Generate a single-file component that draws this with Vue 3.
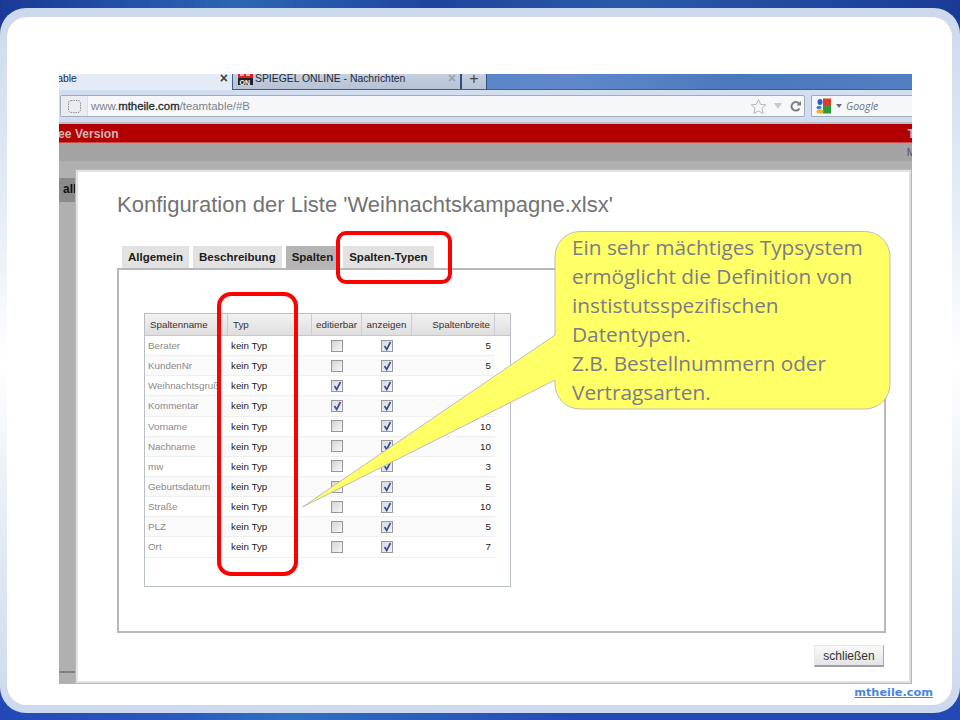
<template>
  <div class="slide">
    <div class="frame">
      <div class="sheet">
        <div class="shot">
          <div class="tabbar">
            <div class="btab active">
              <span class="btab-title">Table</span>
              <span class="btab-x">×</span>
            </div>
            <div class="btab other">
              <svg class="favicon" width="15" height="11" viewBox="0 0 15 11">
                <rect width="15" height="4" fill="#d8232a" />
                <rect y="4" width="15" height="7" fill="#222" />
                <rect x="2" y="0" width="4" height="2" fill="#f3b0a8" />
                <rect x="8" y="0" width="4" height="2" fill="#f3b0a8" />
                <text x="1.500" y="10.500" font-size="7" font-weight="700" fill="#fff" font-family="Liberation Sans, sans-serif">ON</text>
              </svg>
              <span class="btab-title">SPIEGEL ONLINE - Nachrichten</span>
              <span class="btab-x dim">×</span>
            </div>
            <div class="plus">+</div>
          </div>
          <div class="navbar">
            <div class="urlbar">
              <div class="identity">
                <svg width="15" height="15" viewBox="0 0 15 15">
                  <rect x="1.500" y="1.500" width="12" height="12" rx="2.500" fill="none" stroke="#8c8c8c" stroke-dasharray="1.500 1" />
                </svg>
              </div>
              <div class="url">www.<b>mtheile.com</b>/teamtable/#B</div>
              <svg class="star" width="17" height="17" viewBox="0 0 17 17">
                <path d="M8.500 1.500l2.100 4.900 5.200.5-3.900 3.400 1.200 5.200-4.600-2.700-4.600 2.700 1.200-5.200L1.200 6.900l5.200-.5z" fill="#f6f8fb" stroke="#b4b8bc" />
              </svg>
              <svg class="drop" width="10" height="8" viewBox="0 0 10 8"><path d="M1 1h8L5 7z" fill="#c6cad0" /></svg>
              <svg class="reload" width="13" height="13" viewBox="0 0 13 13">
                <path d="M10.500 8.500a4.300 4.300 0 1 1-.4-5" fill="none" stroke="#7a7f85" stroke-width="2" />
                <path d="M7.500 5.500h4.500V1z" fill="#7a7f85" />
              </svg>
            </div>
            <div class="searchbar">
              <svg width="16" height="16" viewBox="0 0 16 16">
                <rect x="7" y="0.500" width="8" height="7" fill="#dd3a2c" />
                <rect x="7" y="7" width="8" height="8.500" fill="#2e9a3e" />
                <ellipse cx="4" cy="4" rx="2.500" ry="3" fill="#2a5fc0" />
                <ellipse cx="3" cy="9.500" rx="2.500" ry="1.800" fill="#3c78d8" />
                <ellipse cx="4" cy="13.500" rx="3.500" ry="2.200" fill="#efb320" />
              </svg>
              <svg class="sdrop" width="6" height="4" viewBox="0 0 6 4"><path d="M0 0h6L3 4z" fill="#6b6f75" /></svg>
              <span class="google">Google</span>
            </div>
          </div>
          <div class="redbar">
            <span class="free">Free Version</span>
            <span class="redright">T</span>
          </div>
          <div class="greybar"><span>M</span></div>
          <div class="page">
            <div class="sidebar">
              <div class="alltab"><span>all</span></div>
              <div class="sideline"></div>
            </div>
            <div class="modal">
              <h1 class="title">Konfiguration der Liste 'Weihnachtskampagne.xlsx'</h1>
              <div class="tabs">
                <div v-for="tab in tabs" :key="tab" class="tab" :class="{ selected: tab === 'Spalten' }">{{ tab }}</div>
              </div>
              <div class="tabpanel">
                <div class="grid">
                  <div class="ghead">
                    <div class="gh c-name">Spaltenname</div>
                    <div class="gh c-typ">Typ</div>
                    <div class="gh c-edit">editierbar</div>
                    <div class="gh c-show">anzeigen</div>
                    <div class="gh c-width">Spaltenbreite</div>
                    <div class="gh-fill"></div>
                  </div>
                  <div v-for="row in rows" :key="row.name" class="grow">
                    <div class="gc c-name muted">{{ row.name }}</div>
                    <div class="gc c-typ">kein Typ</div>
                    <div class="gc c-edit"><span class="check" :class="{ on: row.edit }"><svg v-if="row.edit" width="9" height="10" viewBox="0 0 9 10"><path d="M1.500 5l2.200 3.500L7.500 1" fill="none" stroke="#3a4f9c" stroke-width="1.700" /></svg></span></div>
                    <div class="gc c-show"><span class="check on"><svg width="9" height="10" viewBox="0 0 9 10"><path d="M1.500 5l2.200 3.500L7.500 1" fill="none" stroke="#3a4f9c" stroke-width="1.700" /></svg></span></div>
                    <div class="gc c-width">{{ row.width }}</div>
                  </div>
                </div>
              </div>
              <div class="modal-foot">
                <button class="close">schließen</button>
              </div>
            </div>
          </div>
        </div>
        <div class="credit"><a>mtheile.com</a></div>
        <div class="mark mark-tabs"></div>
        <div class="mark mark-typ"></div>
        <svg class="bubble" width="600" height="290" viewBox="300 228 600 290">
          <path d="M580 231.500H865a25 25 0 0 1 25 25V384a25 25 0 0 1-25 25H580a25 25 0 0 1-25-25V380L302.500 507L555 335V256.500a25 25 0 0 1 25-25z" fill="#ffff66" stroke="#bdbdbd" />
        </svg>
        <div class="bubble-text">Ein sehr mächtiges Typsystem<br />ermöglicht die Definition von<br />instistutsspezifischen<br />Datentypen.<br />Z.B. Bestellnummern oder<br />Vertragsarten.</div>
      </div>
    </div>
  </div>
</template>

<script setup>
const tabs = ["Allgemein", "Beschreibung", "Spalten", "Spalten-Typen"];

const rows = [
  { name: "Berater", edit: false, width: 5 },
  { name: "KundenNr", edit: false, width: 5 },
  { name: "Weihnachtsgruß", edit: true, width: "" },
  { name: "Kommentar", edit: true, width: "" },
  { name: "Vorname", edit: false, width: 10 },
  { name: "Nachname", edit: false, width: 10 },
  { name: "mw", edit: false, width: 3 },
  { name: "Geburtsdatum", edit: false, width: 5 },
  { name: "Straße", edit: false, width: 10 },
  { name: "PLZ", edit: false, width: 5 },
  { name: "Ort", edit: false, width: 7 },
];
</script>

<style>
html,
body {
  margin: 0;
  background: #fff;
}
</style>

<style scoped>
.slide {
  width: 960px;
  height: 720px;
  box-sizing: border-box;
  padding-top: 8px;
  padding-bottom: 7px;
  background:
    linear-gradient(90deg, #1a3a96 0%, #2b66b4 25%, #1e449c 45%, #2a5aa8 65%, #1a3a96 100%) top / 100% 50% no-repeat,
    linear-gradient(90deg, #2348b6 0%, #2a5cc0 20%, #2f70c4 30%, #2449b4 60%, #2349b5 100%) bottom / 100% 50% no-repeat;
  overflow: hidden;
  font-family: "Liberation Sans", Arial, sans-serif;
}

.frame {
  height: 100%;
  box-sizing: border-box;
  padding: 9px 8px 8px 7px;
  border-radius: 26px;
  background: linear-gradient(180deg, #ccd9ec 0%, #e8eef7 30%, #ffffff 50%, #e4ebf5 75%, #ccd9ec 100%);
}

.sheet {
  position: relative;
  height: 100%;
  box-sizing: border-box;
  padding: 57px 0 0 52px;
  background: #fff;
  border-radius: 20px;
}

.shot {
  width: 853px;
  height: 610px;
  display: flex;
  flex-direction: column;
  overflow: hidden;
  background: #b0b0b0;
}

.tabbar {
  height: 16px;
  box-sizing: border-box;
  flex: none;
  display: flex;
  background: linear-gradient(90deg, #4a78bc, #6088cb 60%, #4a78bc 80%, #527fc2);
  border-bottom: 1px solid #3d5f8f;
  font-size: 10.400px;
  color: #1e2a3a;
}

.btab {
  display: flex;
  align-items: flex-start;
  height: 15px;
  overflow: hidden;
}

.active {
  width: 174px;
  box-sizing: border-box;
  background: #e4eaf6;
  border-right: 1px solid #3d5f8f;
  height: 16px;
}

.active .btab-title {
  margin-left: -7px;
}

.btab-title {
  flex: 1;
  line-height: 9px;
  padding-top: 0;
  white-space: nowrap;
}

.btab-x {
  font-size: 14px;
  font-weight: 700;
  line-height: 9px;
  margin-right: 4px;
  color: #444;
}

.btab-x.dim {
  color: #9aa3b0;
}

.other {
  width: 229px;
  padding-left: 5px;
  box-sizing: border-box;
  background: linear-gradient(180deg, #c5cfdf, #b7c2d6);
  border-right: 2px solid #2f4f7f;
}

.favicon {
  flex: none;
  margin-right: 2px;
}

.plus {
  width: 24px;
  height: 15px;
  background: linear-gradient(180deg, #c5cfdf, #b7c2d6);
  border-right: 1px solid #2f4f7f;
  color: #444;
  font-size: 16px;
  line-height: 9px;
  text-align: center;
}

.navbar {
  height: 34px;
  flex: none;
  box-sizing: border-box;
  padding: 5px 0 0 1px;
  display: flex;
  gap: 6px;
  background: #d2def0;
  border-bottom: 2px solid #bcc1c7;
}

.urlbar {
  width: 745px;
  height: 22px;
  box-sizing: border-box;
  display: flex;
  align-items: center;
  background: #f5f7fb;
  border: 1px solid #a3abb6;
  border-radius: 2px;
}

.identity {
  width: 26px;
  height: 20px;
  flex: none;
  display: flex;
  align-items: center;
  justify-content: center;
  background: #e9edf3;
  border-right: 1px solid #dbe0e7;
}

.url {
  flex: 1;
  margin-left: 3px;
  font-size: 11.400px;
  color: #7d8287;
}

.url b {
  color: #26292c;
  font-weight: 400;
  -webkit-text-stroke: 0.3px #26292c;
}

.star {
  flex: none;
  margin-right: 6px;
}

.drop {
  flex: none;
  margin-right: 6px;
}

.reload {
  flex: none;
  margin-right: 2px;
}

.searchbar {
  flex: 1;
  height: 22px;
  box-sizing: border-box;
  display: flex;
  align-items: center;
  padding-left: 4px;
  background: #f5f7fb;
  border: 1px solid #a3abb6;
  border-right: 0;
  border-radius: 2px 0 0 2px;
}

.sdrop {
  margin: 0 4px 0 4px;
}

.google {
  font-size: 10.500px;
  font-style: italic;
  color: #6f7377;
  font-family: "Open Sans", sans-serif;
}

.redbar {
  height: 19px;
  flex: none;
  display: flex;
  justify-content: space-between;
  align-items: center;
  background: #b20000;
  border-bottom: 1px solid #c94a4a;
  box-sizing: border-box;
  padding-top: 1px;
  font-size: 12.100px;
  font-weight: 700;
  color: #d2b4b4;
}

.free {
  margin-left: -13px;
}

.redright {
  margin-right: -3px;
}

.greybar {
  height: 18px;
  flex: none;
  display: flex;
  justify-content: flex-end;
  align-items: center;
  background: #a3a3a3;
  font-size: 11px;
  color: #555;
}

.greybar span {
  margin-right: -4px;
}

.page {
  flex: 1;
  display: flex;
  padding-top: 8px;
  min-height: 0;
}

.sidebar {
  width: 16px;
  flex: none;
  position: relative;
}

.alltab {
  margin-top: 9px;
  height: 24px;
  background: #8a8a8a;
  overflow: hidden;
  font-size: 12px;
  font-weight: 700;
  line-height: 22px;
  color: #111;
  padding-left: 4px;
  white-space: nowrap;
}

.sideline {
  margin-top: 469px;
  height: 2px;
  background: #808080;
}

.modal {
  flex: 1;
  box-sizing: border-box;
  background: #fff;
  border: 3px solid #e2e2e2;
  border-right-color: #dcdcdc;
  outline: 1px solid #b8b8b8;
  outline-offset: -1px;
  display: flex;
  flex-direction: column;
  padding: 0 23px 0 39px;
  min-height: 0;
}

.title {
  margin: 20px 0 0;
  font-size: 22px;
  font-weight: 400;
  line-height: 26px;
  color: #737373;
  white-space: nowrap;
}

.tabs {
  display: flex;
  gap: 4px;
  margin: 28px 0 0 5px;
}

.tab {
  height: 22px;
  box-sizing: border-box;
  padding: 0 6px;
  background: #e2e2e2;
  font-size: 11.500px;
  font-weight: 700;
  line-height: 22px;
  color: #1c1c1c;
  white-space: nowrap;
}

.tab.selected {
  background: #b5b5b5;
}

.tabpanel {
  height: 365px;
  box-sizing: border-box;
  border: 2px solid #b8b8b8;
  background: #fff;
  padding: 43px 0 0 25px;
}

.grid {
  width: 367px;
  height: 274px;
  box-sizing: border-box;
  border: 1px solid #b9bfc6;
  font-size: 9.800px;
}

.ghead {
  height: 21px;
  display: flex;
  background: linear-gradient(180deg, #f2f2f2, #dedede);
  border-bottom: 1px solid #c4cad0;
  color: #333;
  line-height: 21px;
}

.gh {
  box-sizing: border-box;
  height: 21px;
  border-right: 1px solid #c9ced4;
}

.gh-fill {
  flex: 1;
}

.grow {
  height: 20.150px;
  width: 350px;
  display: flex;
  align-items: center;
  border-bottom: 1px solid #efefef;
  box-sizing: border-box;
  color: #1a1a1a;
}

.grow:nth-child(even) {
  background: #fff;
}

.grow:nth-child(odd) {
  background: #fafafa;
}

.gc {
  box-sizing: border-box;
  white-space: nowrap;
  overflow: hidden;
}

.c-name {
  width: 83px;
  flex: none;
  padding-left: 5px;
}

.gc.c-name {
  padding-left: 3px;
}

.c-typ {
  width: 84px;
  flex: none;
  padding-left: 5px;
}

.gc.c-typ {
  padding-left: 3px;
}

.c-edit {
  width: 50px;
  flex: none;
  text-align: center;
}

.c-show {
  width: 50px;
  flex: none;
  text-align: center;
}

.c-width {
  width: 83px;
  flex: none;
  text-align: right;
  padding-right: 4px;
}

.muted {
  color: #8a8a8a;
}

.gc.c-edit,
.gc.c-show {
  display: flex;
  justify-content: center;
}

.check {
  width: 12px;
  height: 12px;
  box-sizing: border-box;
  display: flex;
  align-items: center;
  justify-content: center;
  border: 1px solid #989898;
  background: linear-gradient(135deg, #d4d4d4, #f8f8f8);
}

.check.on {
  background: linear-gradient(135deg, #d6dae6, #f4f5f9);
}

.modal-foot {
  display: flex;
  justify-content: flex-end;
  margin-top: 12px;
}

.close {
  width: 70px;
  height: 22px;
  padding: 0;
  margin-right: 2px;
  background: linear-gradient(180deg, #fafafa, #e4e4e4);
  border: 0;
  border-top: 1px solid #e6e6e6;
  border-left: 1px solid #e6e6e6;
  border-right: 1px solid #a8a8a8;
  border-bottom: 2px solid #a0a0a0;
  color: #333;
  font-family: "Liberation Sans", Arial, sans-serif;
  font-size: 12px;
}

.credit {
  position: absolute;
  right: 19px;
  top: 669px;
  font-family: "DejaVu Sans", sans-serif;
  font-size: 11.300px;
  font-weight: 700;
  color: #4a86e0;
  text-decoration: underline;
}

.mark {
  position: absolute;
  box-sizing: border-box;
  border: 4px solid #ff0000;
}

.mark-tabs {
  left: 329px;
  top: 214px;
  width: 116px;
  height: 53px;
  border-radius: 10px;
}

.mark-typ {
  left: 210px;
  top: 275px;
  width: 81px;
  height: 284px;
  border-radius: 14px;
}

.bubble {
  position: absolute;
  left: 293px;
  top: 211px;
}

.bubble-text {
  position: absolute;
  left: 565px;
  top: 216px;
  font-family: "Open Sans", sans-serif;
  font-size: 20.800px;
  line-height: 29px;
  color: #7c7c88;
  white-space: nowrap;
}
</style>
